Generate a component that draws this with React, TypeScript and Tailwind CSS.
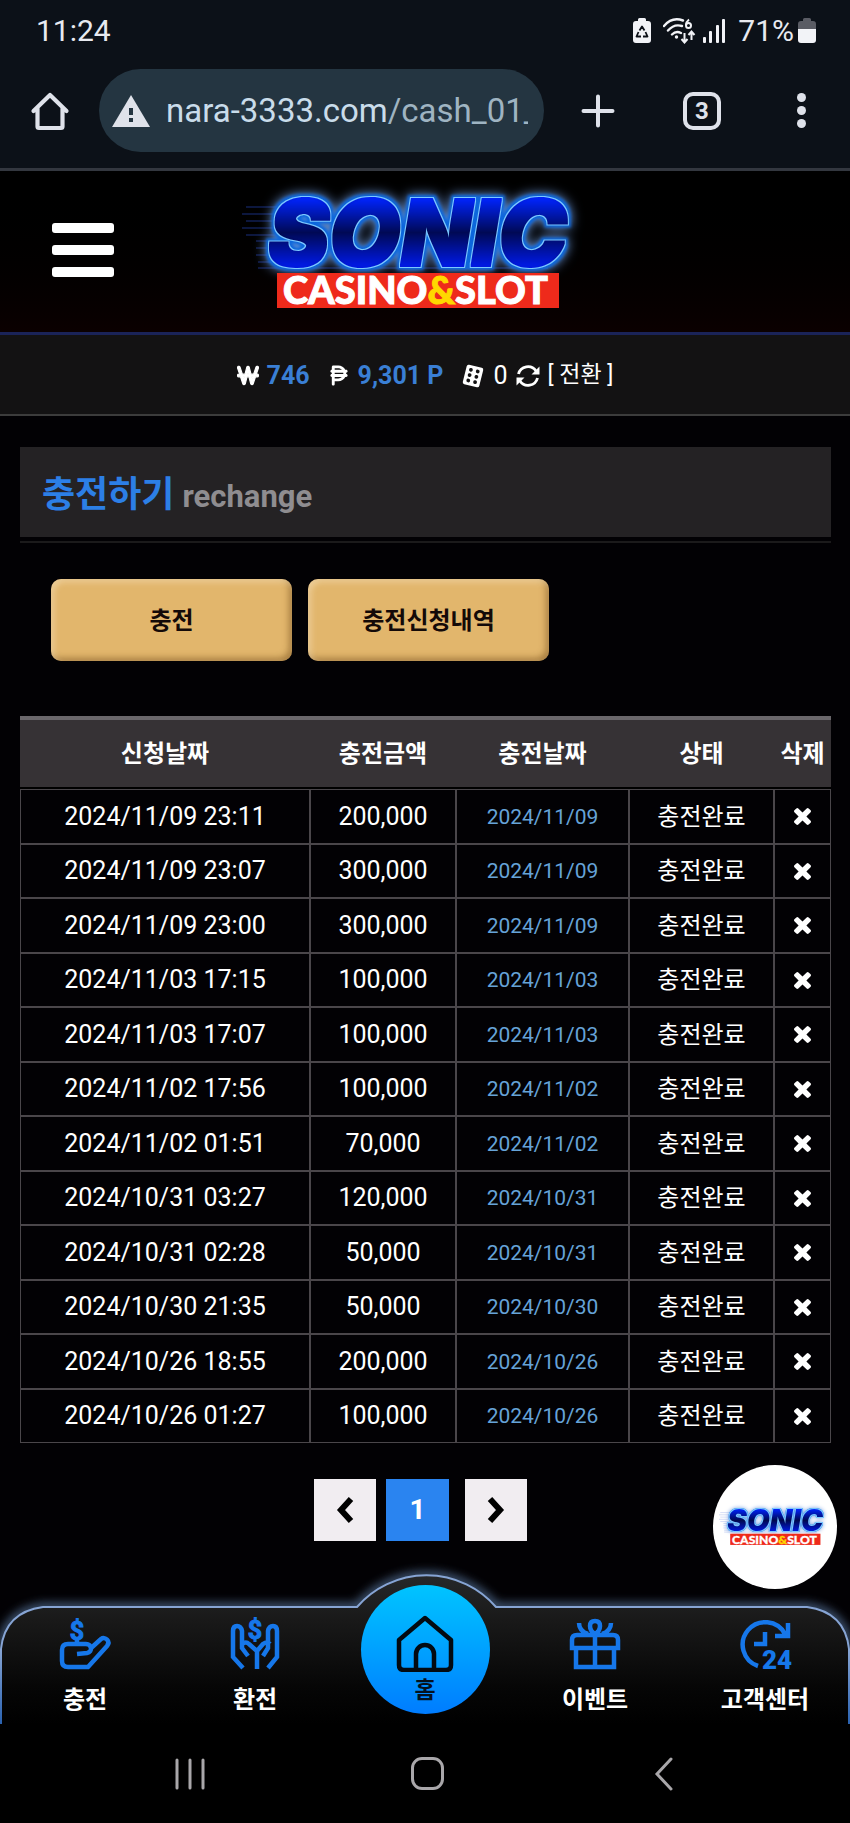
import type { ReactNode } from 'react';
import { FaPesoSign, FaWonSign } from 'react-icons/fa6';

type Deposit = {
  requested: string;
  amount: string;
  charged: string;
};

const deposits: Deposit[] = [
  { requested: '2024/11/09 23:11', amount: '200,000', charged: '2024/11/09' },
  { requested: '2024/11/09 23:07', amount: '300,000', charged: '2024/11/09' },
  { requested: '2024/11/09 23:00', amount: '300,000', charged: '2024/11/09' },
  { requested: '2024/11/03 17:15', amount: '100,000', charged: '2024/11/03' },
  { requested: '2024/11/03 17:07', amount: '100,000', charged: '2024/11/03' },
  { requested: '2024/11/02 17:56', amount: '100,000', charged: '2024/11/02' },
  { requested: '2024/11/02 01:51', amount: '70,000', charged: '2024/11/02' },
  { requested: '2024/10/31 03:27', amount: '120,000', charged: '2024/10/31' },
  { requested: '2024/10/31 02:28', amount: '50,000', charged: '2024/10/31' },
  { requested: '2024/10/30 21:35', amount: '50,000', charged: '2024/10/30' },
  { requested: '2024/10/26 18:55', amount: '200,000', charged: '2024/10/26' },
  { requested: '2024/10/26 01:27', amount: '100,000', charged: '2024/10/26' },
];

function StatusBar() {
  return (
    <div className="flex h-[62px] items-center justify-between pl-9 pr-[34px] text-[30px] leading-none text-[#e8eaf0]">
      <span>11:24</span>
      <div className="flex items-center">
        <svg className="mr-3 h-[26px] w-[18px]" viewBox="0 0 18 26">
          <path d="M5 3V1.500Q5 0 6.500 0h5Q13 0 13 1.500V3h2q3 0 3 3v16q0 3-3 3H3q-3 0-3-3V6q0-3 3-3z" fill="#f2f3f7" />
          <path d="M6.500 12.500 9 8.500l2.500 4M12.500 14l2 4.500h-4.500M5.500 14l-2 4.500H8" fill="none" stroke="#0c1018" strokeWidth="1.8" strokeLinejoin="round" />
        </svg>
        <svg className="mr-[6px] h-[26px] w-[34px]" viewBox="0 0 34 26" fill="none" stroke="#f2f3f7" strokeWidth="2.4">
          <path d="M1 8Q9-1.500 20 2.500M5 12.500q6-7 14-4.500M9 16.500q4-4 9-1.500" strokeLinecap="round" />
          <circle cx="13.500" cy="19" r="1.700" fill="#f2f3f7" stroke="none" />
          <path d="M26 1.500q-3 2.500-3 5.500" strokeWidth="2" />
          <circle cx="25.500" cy="7.500" r="2.500" strokeWidth="2" />
          <path d="M21.500 15v9m-3-3 3 3.500 3-3.500M28.500 22v-8m-3 3 3-3.500 3 3.500" strokeWidth="2" />
        </svg>
        <svg className="mr-3 h-[26px] w-[23px]" viewBox="0 0 23 26" fill="#f2f3f7">
          <rect x="0" y="19" width="3" height="6" rx="1" />
          <rect x="6" y="13" width="3" height="12" rx="1" />
          <rect x="13" y="7" width="3" height="18" rx="1" />
          <rect x="19" y="1" width="3" height="24" rx="1" />
        </svg>
        <span className="mr-1">71%</span>
        <svg className="h-[26px] w-[18px]" viewBox="0 0 18 26">
          <path d="M5 3V1.500Q5 0 6.500 0h5Q13 0 13 1.500V3h2q3 0 3 3v5H0V6q0-3 3-3z" fill="#5a5c64" />
          <path d="M0 11h18v11q0 3-3 3H3q-3 0-3-3z" fill="#f2f3f7" />
        </svg>
      </div>
    </div>
  );
}

function BrowserBar() {
  return (
    <div className="flex h-[109px] items-start border-b-[3px] border-[#33373f] pl-[30px] pr-9 pt-[7px]">
      <button type="button" aria-label="Home" className="mr-[29px] flex h-[83px] w-10 items-center">
        <svg className="h-10 w-10" viewBox="0 0 40 40" fill="none" stroke="#dfe2ea" strokeWidth="4.200" strokeLinejoin="round" strokeLinecap="round">
          <path d="M3.500 20 20 4l16.500 16M7.500 17v18.500q0 1.500 1.500 1.500h22q1.500 0 1.500-1.500V17" />
        </svg>
      </button>
      <div className="flex h-[83px] min-w-0 flex-1 items-center rounded-full bg-[#243541] pl-[13px] pr-4">
        <svg className="mr-4 h-8 w-[38px] shrink-0" viewBox="0 0 38 32">
          <path d="M19 0 38 32H0z" fill="#dfe2ea" />
          <path d="M17 13h4v7h-4zM17 23h4v4h-4z" fill="#243541" />
        </svg>
        <span className="flex-1 overflow-hidden whitespace-nowrap text-[33px] leading-[42px] text-[#c9dcea]">
          nara-3333.com<span className="text-[#9fb4c2]">/cash_01_</span>
        </span>
      </div>
      <div className="ml-9 flex h-[83px] w-[234px] items-center justify-between">
        <button type="button" aria-label="New tab">
          <svg className="h-9 w-9" viewBox="0 0 36 36" stroke="#dfe2ea" strokeWidth="4" strokeLinecap="round">
            <path d="M18 3.500v29M3.500 18h29" />
          </svg>
        </button>
        <button
          type="button"
          className="flex h-[38px] w-[38px] items-center justify-center rounded-[10px] border-4 border-[#dfe2ea] text-2xl font-bold leading-none text-[#dfe2ea]"
        >
          3
        </button>
        <button type="button" aria-label="Menu" className="flex w-[26px] flex-col items-center gap-1">
          <span className="h-[9px] w-[9px] rounded-full bg-[#dfe2ea]" />
          <span className="h-[9px] w-[9px] rounded-full bg-[#dfe2ea]" />
          <span className="h-[9px] w-[9px] rounded-full bg-[#dfe2ea]" />
        </button>
      </div>
    </div>
  );
}

function Logo({ id, className }: { id: string; className: string }) {
  return (
    <svg className={`overflow-visible ${className}`} viewBox="0 0 350 124" role="img" aria-label="SONIC CASINO&SLOT">
      <defs>
        {/* thickens the letters, then adds the light outline and the neon glow */}
        <filter id={`${id}-neon`} x="-15%" y="-30%" width="130%" height="160%" colorInterpolationFilters="sRGB">
          <feMorphology in="SourceGraphic" operator="dilate" radius="1" result="fat" />
          <feMorphology in="SourceAlpha" operator="dilate" radius="2" result="edge" />
          <feFlood floodColor="#7cc8ff" />
          <feComposite in2="edge" operator="in" result="outline" />
          <feMorphology in="SourceAlpha" operator="dilate" radius="4" result="wide" />
          <feGaussianBlur in="wide" stdDeviation="1.500" result="wideSoft" />
          <feFlood floodColor="#0b66dc" />
          <feComposite in2="wideSoft" operator="in" result="halo" />
          <feGaussianBlur in="wide" stdDeviation="6" result="far" />
          <feFlood floodColor="#6f9be0" />
          <feComposite in2="far" operator="in" result="glow" />
          <feMerge>
            <feMergeNode in="glow" />
            <feMergeNode in="halo" />
            <feMergeNode in="outline" />
            <feMergeNode in="fat" />
          </feMerge>
        </filter>
        <linearGradient id={`${id}-fill`} x1="0" y1="0" x2="0" y2="1">
          <stop offset="0.200" stopColor="#0022f4" />
          <stop offset="0.500" stopColor="#000850" />
          <stop offset="0.800" stopColor="#0019e0" />
        </linearGradient>
      </defs>
      <path d="M4 17h60M0 24h60M4 31h60M0 38h60M4 45h50M14 51h40M14 58h20M14 65h20M16 72h20M16 78h290" stroke="#2a4fd0" strokeWidth="1" opacity="0.600" />
      <g filter={`url(#${id}-neon)`} fill={`url(#${id}-fill)`}>
        <text x="26" y="76" fontSize="92" fontWeight="900" fontStyle="italic" fontFamily="Inter, sans-serif">
          SONIC
        </text>
      </g>
      <rect x="35" y="83" width="282" height="35" fill="#ee2a1b" />
      <text x="41" y="114" fontSize="38" fontWeight="900" fontFamily="Lato, sans-serif" fill="#fff" stroke="#fff">
        CASINO<tspan fill="#ffd800" stroke="#ffd800">&amp;</tspan>SLOT
      </text>
    </svg>
  );
}

function SiteHeader() {
  return (
    <header className="relative flex h-[164px] items-center justify-center border-b-[3px] border-[#1a2358] bg-gradient-to-b from-black to-[#0b0000] pr-4">
      <button type="button" aria-label="메뉴" className="absolute left-[52px] top-[52px] flex w-[62px] flex-col gap-3">
        <span className="h-[10px] rounded-[3px] bg-white" />
        <span className="h-[10px] rounded-[3px] bg-white" />
        <span className="h-[10px] rounded-[3px] bg-white" />
      </button>
      <Logo id="top" className="h-[124px] w-[350px]" />
    </header>
  );
}

function BalanceBar() {
  return (
    <div className="flex h-[81px] items-center justify-center border-b-2 border-[#3c3c3c] bg-[#131213] pt-[2px] text-[25px] text-white">
      <FaWonSign className="mr-2 h-[21px] w-[22px]" stroke="currentColor" strokeWidth="28" />
      <b className="mr-[18px] text-[#3a7fd5]">746</b>
      <FaPesoSign className="mr-2 h-[23px] w-[22px]" />
      <b className="mr-[18px] text-[#3a7fd5]">9,301 P</b>
      <svg className="mr-2 h-6 w-6" viewBox="0 0 22 24">
        <g transform="rotate(14 11 12)">
          <rect x="2.500" y="2" width="17" height="20" rx="2" fill="#fff" />
          <g fill="#131213">
            <circle cx="7.500" cy="6.500" r="1.900" />
            <circle cx="14.500" cy="6.500" r="1.900" />
            <circle cx="7.500" cy="12" r="1.900" />
            <circle cx="14.500" cy="12" r="1.900" />
            <circle cx="7.500" cy="17.500" r="1.900" />
            <circle cx="14.500" cy="17.500" r="1.900" />
          </g>
        </g>
      </svg>
      <span className="mr-2">0</span>
      <svg className="mr-2 h-6 w-6" viewBox="0 0 24 24" fill="none" stroke="#fff" strokeWidth="2.800">
        <path d="M2.500 10A9.700 9.700 0 0 1 20 7M21.500 14A9.700 9.700 0 0 1 4 17" />
        <path d="M23.500 2.500v8h-8zM.500 21.500v-8h8z" fill="#fff" stroke="none" />
      </svg>
      <button type="button" className="text-[23px]">[ 전환 ]</button>
    </div>
  );
}

function PageTitle() {
  return (
    <div className="border-b-2 border-[#1b1a1b] pb-1">
      <h1 className="flex h-[90px] items-baseline gap-2 bg-[#242224] pl-[22px] pt-[22px] text-[36px] font-bold leading-[52px] text-[#2c7fe6]">
        충전하기 <small className="text-[31px] leading-none text-[#8f8d90]">rechange</small>
      </h1>
    </div>
  );
}

function GoldButton({ children }: { children: ReactNode }) {
  return (
    <button
      type="button"
      className="h-[82px] w-[241px] rounded-[10px] bg-[#e2b66c] pt-[2px] text-2xl font-bold text-[#140a08] shadow-[inset_3px_3px_6px_rgba(255,240,210,0.45),inset_-3px_-3px_6px_rgba(110,70,20,0.5)]"
    >
      {children}
    </button>
  );
}

function DepositTable() {
  const cell = 'border border-[#4a464a] p-0';
  return (
    <table className="w-full table-fixed border-separate border-spacing-0 text-center text-white">
      <colgroup>
        <col className="w-[290px]" />
        <col className="w-[146px]" />
        <col className="w-[173px]" />
        <col className="w-[145px]" />
        <col className="w-[57px]" />
      </colgroup>
      <thead>
        <tr className="h-[73px] text-2xl">
          {['신청날짜', '충전금액', '충전날짜', '상태', '삭제'].map((title) => (
            <th key={title} className="whitespace-nowrap border-b-2 border-t-4 border-b-black border-t-[#6a676b] bg-[#363235] p-0 font-bold">
              {title}
            </th>
          ))}
        </tr>
      </thead>
      <tbody className="text-[25px] leading-9">
        {deposits.map((row) => (
          <tr key={row.requested} className="odd:h-[55px] even:h-[54px]">
            <td className={cell}>{row.requested}</td>
            <td className={cell}>{row.amount}</td>
            <td className={`${cell} text-[21px] text-[#66a3d8]`}>{row.charged}</td>
            <td className={`${cell} text-2xl`}>충전완료</td>
            <td className={cell}>
              <button type="button" aria-label="삭제" className="block w-full">
                <svg className="mx-auto h-[17px] w-[17px]" viewBox="302 366 1188 1188" fill="#fff">
                  <path d="M1490 1322q0 40-28 68l-136 136q-28 28-68 28t-68-28l-294-294-294 294q-28 28-68 28t-68-28l-136-136q-28-28-28-68t28-68l294-294-294-294q-28-28-28-68t28-68l136-136q28-28 68-28t68 28l294 294 294-294q28-28 68-28t68 28l136 136q28 28 28 68t-28 68l-294 294 294 294q28 28 28 68z" />
                </svg>
              </button>
            </td>
          </tr>
        ))}
      </tbody>
    </table>
  );
}

function Pagination() {
  const arrow = 'flex h-[62px] w-[62px] items-center justify-center bg-[#f1edf1]';
  return (
    <nav aria-label="페이지" className="flex justify-center pr-[10px]">
      <button type="button" aria-label="이전" className={`${arrow} mr-[10px]`}>
        <svg className="h-7 w-[18px]" viewBox="0 0 18 28" fill="none" stroke="#000" strokeWidth="6">
          <path d="M15 3 5 14l10 11" />
        </svg>
      </button>
      <button type="button" aria-current="page" className="mr-4 h-[62px] w-[63px] bg-[#2a84f0] text-[28px] font-bold text-white">
        1
      </button>
      <button type="button" aria-label="다음" className={arrow}>
        <svg className="h-7 w-[18px]" viewBox="0 0 18 28" fill="none" stroke="#000" strokeWidth="6">
          <path d="M3 3l10 11L3 25" />
        </svg>
      </button>
    </nav>
  );
}

function NavItem({ label, children }: { label: string; children: ReactNode }) {
  return (
    <a href="#" className="flex flex-col items-center pt-[59px] text-2xl font-bold leading-9 text-white">
      <svg className="mb-[13px] h-[50px] w-[50px] overflow-visible" viewBox="0 0 50 50" fill="none" stroke="#1677ea" strokeWidth="4.500">
        {children}
      </svg>
      {label}
    </a>
  );
}

function BottomNav() {
  return (
    <nav aria-label="하단 메뉴" className="relative h-[164px]">
      <svg className="absolute inset-0 h-full w-full" viewBox="0 0 850 164" preserveAspectRatio="none">
        <defs>
          <linearGradient id="nav-fill" x1="0" y1="0" x2="0" y2="1">
            <stop offset="0" stopColor="#26282a" />
            <stop offset="0.300" stopColor="#191919" />
            <stop offset="0.750" stopColor="#060606" />
            <stop offset="1" stopColor="#000" />
          </linearGradient>
          <linearGradient id="nav-line" x1="0" y1="0" x2="0" y2="1">
            <stop offset="0.500" stopColor="#86a4d4" />
            <stop offset="1" stopColor="#2a62b0" />
          </linearGradient>
          <filter id="nav-glow" x="-5%" y="-20%" width="110%" height="140%">
            <feGaussianBlur stdDeviation="5" />
          </filter>
        </defs>
        <path d="M1 164V89Q5 52 43 47H357A92 92 0 0 1 496 47H807Q845 52 849 89V164" fill="none" stroke="#4f6a8e" strokeWidth="7" filter="url(#nav-glow)" />
        <path d="M1 164V89Q5 52 43 47H357A92 92 0 0 1 496 47H807Q845 52 849 89V164" fill="url(#nav-fill)" stroke="url(#nav-line)" strokeWidth="2" />
      </svg>
      <div className="relative grid grid-cols-5">
        <NavItem label="충전">
          <text x="17" y="21" textAnchor="middle" fontSize="25" fontWeight="700" fill="#1677ea" strokeWidth="1">$</text>
          <path d="M17 21v4M8 25h18c6 0 7 8 1 9l-10 1M17 25H8q-6 0-6 6v11q0 6 6 6h20l19-21c4-5-2-10-6-7l-11 10" />
        </NavItem>
        <NavItem label="환전">
          <text x="25" y="20" textAnchor="middle" fontSize="25" fontWeight="700" fill="#1677ea" strokeWidth="1">$</text>
          <path d="M13 49 3 38V12q0-5 4-5t5 5v17l6 8M12 25q4-3 7 0l8 7v18M27 32l6-7q4-3 7 0M38 49l9-11V12q0-5-4-5t-5 5v17l-5 8" />
        </NavItem>
        <a href="#" className="mx-auto mt-[25px] flex h-[129px] w-[129px] flex-col items-center rounded-full bg-gradient-to-b from-[#00c4ff] to-[#007cff] pt-[30px] text-[23px] font-bold leading-[38px] text-[#04121f]">
          <svg className="h-[57px] w-[58px] shrink-0" viewBox="0 0 58 57" fill="none" stroke="#030a12" strokeWidth="4.500" strokeLinejoin="round">
            <path d="M3 25 29 3l26 22v25q0 5-5 5H8q-5 0-5-5zM20 55V39a9 9 0 0 1 18 0v16" />
          </svg>
          홈
        </a>
        <NavItem label="이벤트">
          <path d="M25 15q-5-3-5-8 0-5 5-5t5 5q0 5-5 8zM9 4q0 8 9 11M41 4q0 8-9 11M7 16h36q5 0 5 5v8H2v-8q0-5 5-5zM6 29v19h38V29M25 15v33" />
        </NavItem>
        <NavItem label="고객센터">
          <path d="M18 47A22.500 22.500 0 1 1 45 15M48 4v13H35M25 13v12H14" />
          <text x="22" y="50" fontSize="26" fontWeight="900" fill="#1677ea" stroke="none">24</text>
        </NavItem>
      </div>
    </nav>
  );
}

function AndroidNav() {
  return (
    <div className="grid h-[99px] grid-cols-[1fr_102px_1fr] place-items-center bg-black pl-1">
      <button type="button" aria-label="최근 앱">
        <svg className="h-8 w-[30px]" viewBox="0 0 30 32" stroke="#a9a7aa" strokeWidth="3" strokeLinecap="round">
          <path d="M2 2v28M15 2v28M28 2v28" />
        </svg>
      </button>
      <button type="button" aria-label="홈" className="h-[33px] w-[33px] rounded-[11px] border-[3px] border-[#a9a7aa]" />
      <button type="button" aria-label="뒤로">
        <svg className="h-[34px] w-5" viewBox="0 0 20 34" fill="none" stroke="#a9a7aa" strokeWidth="3" strokeLinecap="round">
          <path d="M17 2 3 17l14 15" />
        </svg>
      </button>
    </div>
  );
}

export default function App() {
  return (
    <div className="bg-[#020104] font-['Roboto','Noto_Sans_CJK_KR',sans-serif]">
      <div className="bg-[#0c1118]">
        <StatusBar />
        <BrowserBar />
      </div>
      <SiteHeader />
      <BalanceBar />
      <main className="pl-5 pr-[19px] pt-[31px]">
        <PageTitle />
        <div className="flex gap-4 pb-[55px] pl-[31px] pt-9">
          <GoldButton>충전</GoldButton>
          <GoldButton>충전신청내역</GoldButton>
        </div>
        <DepositTable />
        <div className="relative pb-[19px] pt-9">
          <Pagination />
          <a href="#" className="absolute right-[-6px] top-[22px] z-10 flex h-[124px] w-[124px] items-center justify-center rounded-full bg-white">
            <Logo id="chat" className="h-10 w-[112px]" />
          </a>
        </div>
      </main>
      <BottomNav />
      <AndroidNav />
    </div>
  );
}
